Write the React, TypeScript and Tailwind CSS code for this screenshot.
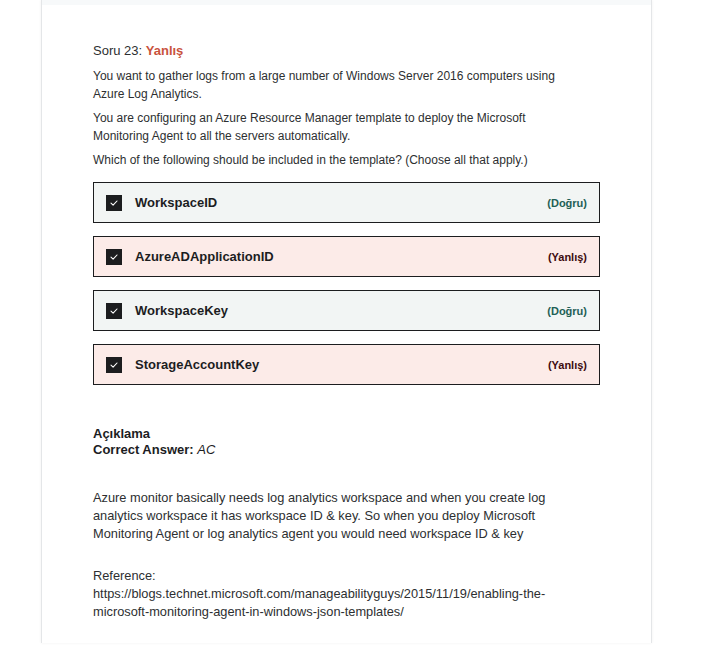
import React from 'react';

const options = [
  { label: 'WorkspaceID', ok: true },
  { label: 'AzureADApplicationID', ok: false },
  { label: 'WorkspaceKey', ok: true },
  { label: 'StorageAccountKey', ok: false },
];

const CheckBox = () => (
  <div className="w-4 h-4 bg-[#1c1d1f] flex items-center justify-center shrink-0">
    <svg width="10" height="10" viewBox="0 0 10 10" fill="none">
      <path d="M2 5.2 L4.1 7.2 L8 3" stroke="white" strokeWidth="1.1" strokeLinecap="round" strokeLinejoin="round" />
    </svg>
  </div>
);

const App = () => {
  return (
    <div className="min-h-screen bg-white text-[#2d2f31]" style={{ fontFamily: '"Liberation Sans", Arial, sans-serif' }}>
      <div className="ml-[41px] w-[611px] h-[643px] border-x border-[#e4e6e8] shadow-[0_0_3px_rgba(0,0,0,0.06)]">
        <div className="h-[5px] bg-[#f7f9fa]" />
        <div className="px-[51px] pt-[37px] text-[12px] leading-[18px]">
          <p className="text-[13px]">
            Soru 23: <span className="font-bold text-[#c9533d]">Yanlış</span>
          </p>
          <p className="mt-[7px]">
            You want to gather logs from a large number of Windows Server 2016 computers using
            <br />
            Azure Log Analytics.
          </p>
          <p className="mt-[6px]">
            You are configuring an Azure Resource Manager template to deploy the Microsoft
            <br />
            Monitoring Agent to all the servers automatically.
          </p>
          <p className="mt-[6px]">Which of the following should be included in the template? (Choose all that apply.)</p>

          <div className="mt-[13px] flex flex-col gap-[13px]">
            {options.map((o) => (
              <div
                key={o.label}
                className={`h-[41px] border border-[#1c1d1f] flex items-center pl-[12px] pr-[12px] ${o.ok ? 'bg-[#f2f5f4]' : 'bg-[#fcebe8]'}`}
              >
                <CheckBox />
                <span className="ml-[13px] text-[13px] font-bold text-[#1c1d1f]">{o.label}</span>
                <span className={`ml-auto text-[11px] font-bold ${o.ok ? 'text-[#1e6055]' : 'text-[#3d0c11]'}`}>
                  {o.ok ? '(Doğru)' : '(Yanlış)'}
                </span>
              </div>
            ))}
          </div>

          <div className="mt-[41px] text-[13px] leading-[16px] text-[#1c1d1f]">
            <p className="font-bold">Açıklama</p>
            <p>
              <span className="font-bold">Correct Answer:</span> <i>AC</i>
            </p>
          </div>

          <div className="text-[12.8px] leading-[18px]">
            <p className="mt-[31px]">
              Azure monitor basically needs log analytics workspace and when you create log
              <br />
              analytics workspace it has workspace ID &amp; key. So when you deploy Microsoft
              <br />
              Monitoring Agent or log analytics agent you would need workspace ID &amp; key
            </p>
            <p className="mt-[24px]">
              Reference:
              <br />
              https://blogs.technet.microsoft.com/manageabilityguys/2015/11/19/enabling-the-
              <br />
              microsoft-monitoring-agent-in-windows-json-templates/
            </p>
          </div>
        </div>
      </div>
    </div>
  );
};

export default App;
